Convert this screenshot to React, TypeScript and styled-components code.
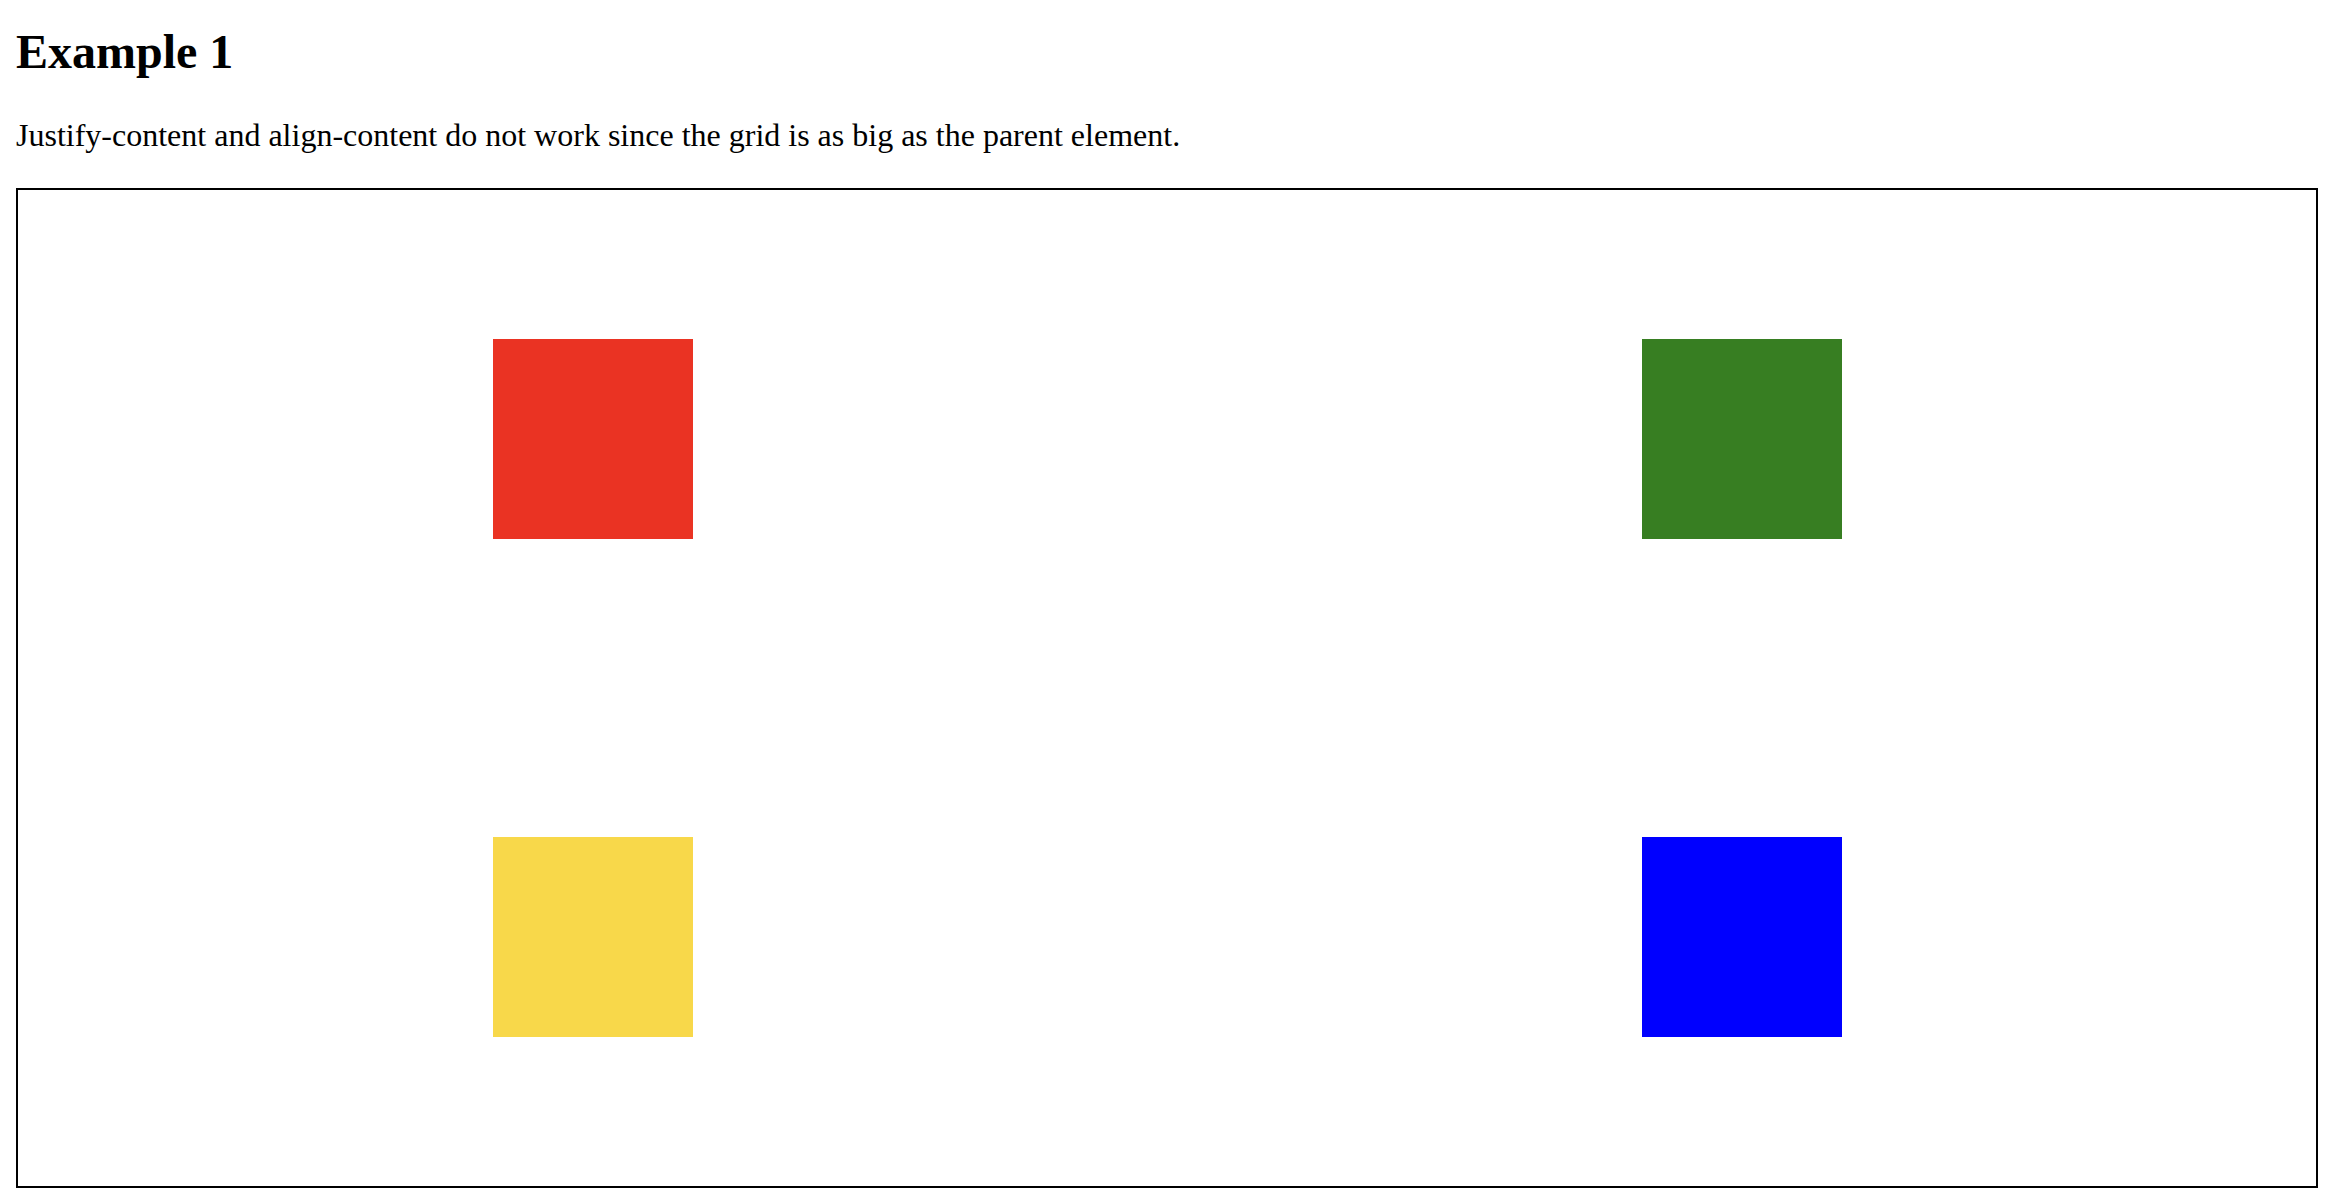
import React from "react";
import styled, { createGlobalStyle } from "styled-components";

const GlobalStyle = createGlobalStyle`
  html, body {
    margin: 0;
    padding: 0;
    background: #ffffff;
    color: #000000;
    font-family: "Liberation Serif", "Times New Roman", serif;
  }
`;

const Page = styled.main`
  display: flex;
  flex-direction: column;
  padding: 0 16px;
`;

const Title = styled.h1`
  margin: 24px 0 0;
  font-size: 48px;
  line-height: 55px;
  font-weight: bold;
`;

const Description = styled.p`
  margin: 38px 0 0;
  font-size: 32px;
  line-height: 37px;
`;

const GridBox = styled.div`
  margin-top: 34px;
  box-sizing: border-box;
  width: 2302px;
  height: 1000px;
  border: 2px solid #000000;
  display: grid;
  grid-template-columns: 1fr 1fr;
  grid-template-rows: 1fr 1fr;
  justify-items: center;
  align-items: center;
`;

const Square = styled.div<{ $color: string }>`
  width: 200px;
  height: 200px;
  background: ${(p) => p.$color};
`;

export default function App() {
  return (
    <>
      <GlobalStyle />
      <Page>
        <Title>Example 1</Title>
        <Description>
          Justify-content and align-content do not work since the grid is as big as the parent element.
        </Description>
        <GridBox>
          <Square $color="#EA3323" />
          <Square $color="#377E22" />
          <Square $color="#F8D84A" />
          <Square $color="#0000FF" />
        </GridBox>
      </Page>
    </>
  );
}
